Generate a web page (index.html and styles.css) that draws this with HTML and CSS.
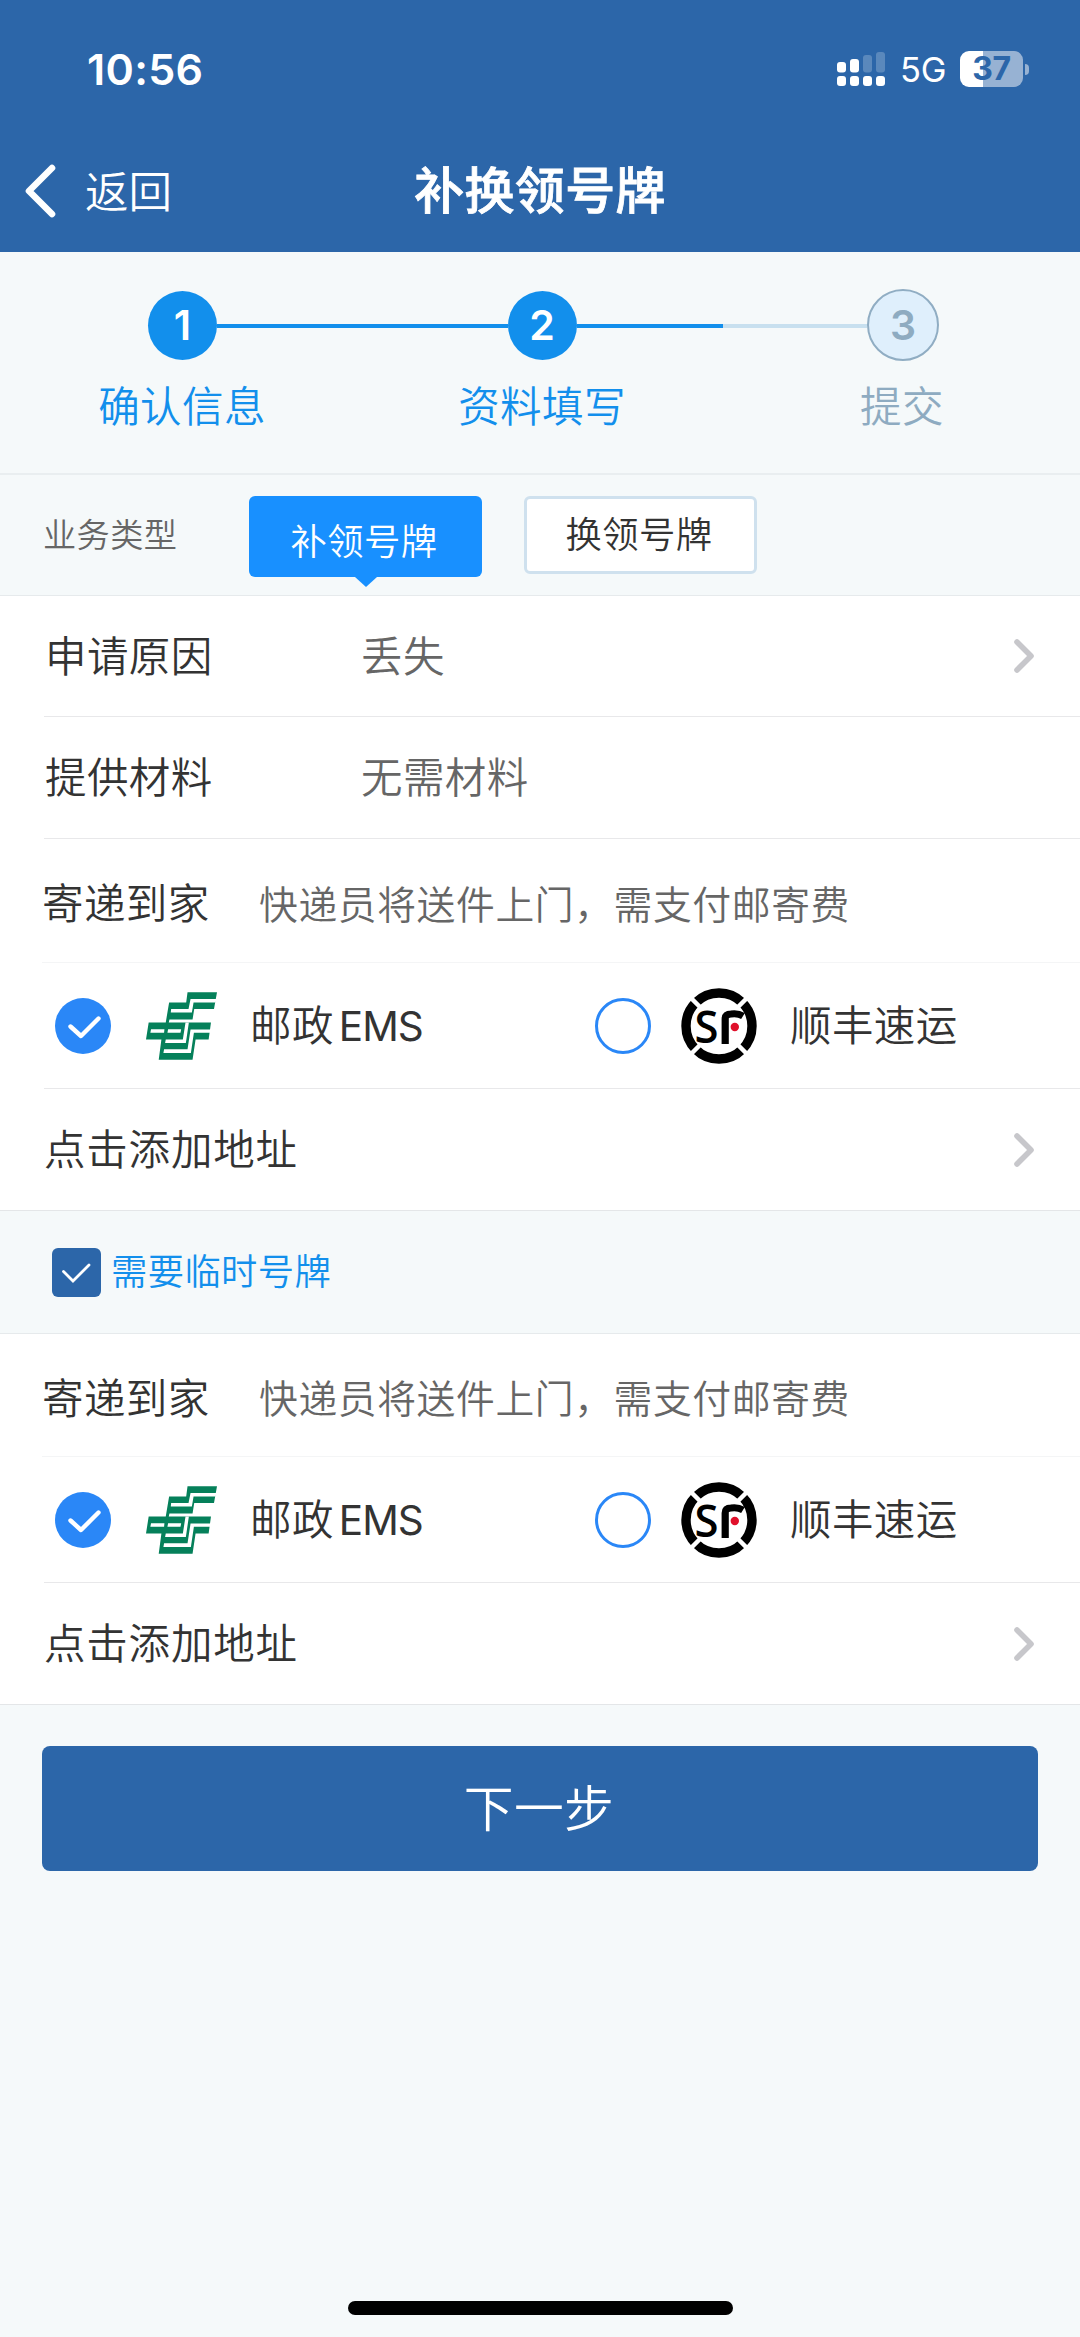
FILE: index.html
```html
<!DOCTYPE html>
<html lang="zh-CN">
<head>
<meta charset="utf-8">
<title>补换领号牌</title>
<link rel="stylesheet" href="styles.css">
</head>
<body>
<svg class="defs" width="0" height="0" aria-hidden="true">
  <symbol id="ems" viewBox="79 70 212 201">
    <path fill="#05805a" d="M148 100H199L203 70H291L282 120H223L218 151H149L147 160H273L266 211H227L218 271H117L125 211H79L87 160H138Z"/>
    <path fill="#fff" d="M154 120H206L212 90H289L287 100H221L216 130H153ZM94 180H134L133 191H92ZM145 180H184L182 191H143ZM197 160H207L198 221H136L138 211H189ZM133 240H203L212 181H272L270 191H222L213 251H131Z"/>
  </symbol>
  <symbol id="next" viewBox="0 0 22 36">
    <path d="M4 4L18 18L4 32" fill="none" stroke="#c7c7cb" stroke-width="5.6" stroke-linecap="round" stroke-linejoin="round"/>
  </symbol>
  <symbol id="tick" viewBox="0 0 56 56">
    <circle cx="28" cy="28" r="28" fill="#2a87f7"/>
    <path d="M15.500 28.500L26 38L43.500 20.500" fill="none" stroke="#fff" stroke-width="4.4" stroke-linecap="round" stroke-linejoin="round"/>
  </symbol>
</svg>

<header class="header">
  <div class="status">
    <span class="time">10:56</span>
    <div class="indicators">
      <svg class="signal" width="48" height="36" viewBox="0 0 48 36" fill="#fff">
        <rect x="0" y="25" width="9" height="10" rx="3"/><rect x="13" y="25" width="9" height="10" rx="3"/><rect x="26" y="25" width="9" height="10" rx="3"/><rect x="39" y="25" width="9" height="10" rx="3"/>
        <rect x="0" y="11" width="9" height="10.5" rx="3"/><rect x="13" y="8" width="9" height="13.5" rx="3"/>
        <g opacity=".22"><rect x="26" y="4" width="9" height="17.5" rx="3"/><rect x="39" y="1" width="9" height="20.5" rx="3"/></g>
      </svg>
      <span class="network">5G</span>
      <div class="battery"><span class="level">37</span><i class="nub"></i></div>
    </div>
  </div>
  <nav class="nav">
    <a class="back">
      <svg width="34" height="56" viewBox="0 0 34 56"><path d="M29 5L6 28L29 51" fill="none" stroke="#fff" stroke-width="6.6" stroke-linecap="round" stroke-linejoin="round"/></svg>
      <span>返回</span>
    </a>
    <h1 class="title">补换领号牌</h1>
  </nav>
</header>

<section class="steps">
  <div class="track">
    <span class="dot">1</span><span class="line"></span><span class="dot">2</span><span class="line half"></span><span class="dot pending">3</span>
  </div>
  <div class="labels"><span>确认信息</span><span>资料填写</span><span class="muted">提交</span></div>
</section>

<section class="kind">
  <span class="kind-label">业务类型</span>
  <button class="option selected">补领号牌</button>
  <button class="option">换领号牌</button>
</section>

<section class="card">
  <div class="row reason"><span class="name">申请原因</span><span class="value">丢失</span><svg class="next"><use href="#next"/></svg></div>
  <div class="row material"><span class="name">提供材料</span><span class="value">无需材料</span></div>
  <div class="row deliver"><span class="name">寄递到家</span><span class="hint">快递员将送件上门，需支付邮寄费</span></div>
  <div class="row carriers">
    <label class="carrier"><svg class="radio"><use href="#tick"/></svg><svg class="ems"><use href="#ems"/></svg><span class="ems-name">邮政<b>EMS</b></span></label>
    <label class="carrier"><span class="radio empty"></span>
      <svg class="sf" viewBox="0 0 80 80">
        <circle cx="40" cy="40" r="33" fill="none" stroke="#000" stroke-width="9.4"/>
        <path d="M10 10L22 22M70 10L58 22M10 70L22 58M70 70L58 58" stroke="#fff" stroke-width="4.5"/>
        <text class="sf-letter" x="15.5" y="57.2" textLength="24" lengthAdjust="spacingAndGlyphs">S</text>
        <path d="M46.2 58V33Q46.2 28 52 28Q59 27 64 30" fill="none" stroke="#000" stroke-width="7.2"/>
        <circle cx="55.8" cy="41" r="4.2" fill="#e0102b"/>
      </svg>
      <span class="sf-name">顺丰速运</span></label>
  </div>
  <div class="row address"><span>点击添加地址</span><svg class="next"><use href="#next"/></svg></div>
</section>

<section class="temp">
  <svg class="check" viewBox="0 0 49 49"><rect width="49" height="49" rx="6" fill="#2c66a9"/><path d="M11.500 23.500L21 33L37 17" fill="none" stroke="#fff" stroke-width="2.8" stroke-linecap="round"/></svg>
  <span>需要临时号牌</span>
</section>

<section class="card second">
  <div class="row deliver"><span class="name">寄递到家</span><span class="hint">快递员将送件上门，需支付邮寄费</span></div>
  <div class="row carriers">
    <label class="carrier"><svg class="radio"><use href="#tick"/></svg><svg class="ems"><use href="#ems"/></svg><span class="ems-name">邮政<b>EMS</b></span></label>
    <label class="carrier"><span class="radio empty"></span>
      <svg class="sf" viewBox="0 0 80 80">
        <circle cx="40" cy="40" r="33" fill="none" stroke="#000" stroke-width="9.4"/>
        <path d="M10 10L22 22M70 10L58 22M10 70L22 58M70 70L58 58" stroke="#fff" stroke-width="4.5"/>
        <text class="sf-letter" x="15.5" y="57.2" textLength="24" lengthAdjust="spacingAndGlyphs">S</text>
        <path d="M46.2 58V33Q46.2 28 52 28Q59 27 64 30" fill="none" stroke="#000" stroke-width="7.2"/>
        <circle cx="55.8" cy="41" r="4.2" fill="#e0102b"/>
      </svg>
      <span class="sf-name">顺丰速运</span></label>
  </div>
  <div class="row address"><span>点击添加地址</span><svg class="next"><use href="#next"/></svg></div>
</section>

<footer class="footer">
  <button class="submit">下一步</button>
  <div class="home-bar"></div>
</footer>
</body>
</html>
```
FILE: styles.css
```css
* { box-sizing: border-box; }
body {
  margin: 0;
  width: 1080px;
  height: 2337px;
  display: flex;
  flex-direction: column;
  background: #f5f9fa;
  color: #333;
  font-family: Inter, "Noto Sans CJK SC", sans-serif;
  font-weight: 350;
  font-size: 41.5px;
  letter-spacing: .4px;
  line-height: 1;
}
button { font: inherit; letter-spacing: inherit; margin: 0; padding: 0; border: 0; }
svg { display: block; flex: none; }
.defs { position: absolute; }

.header { height: 252px; background: #2c66a9; color: #fff; }
.status { height: 138px; padding: 0 51px 0 87px; display: flex; align-items: center; justify-content: space-between; }
.time { font-size: 43px; font-weight: 600; letter-spacing: .3px; }
.indicators { display: flex; align-items: center; }
.network { margin-left: 15px; width: 60px; font-size: 34.5px; font-weight: 400; letter-spacing: -.2px; padding-top: 3px; }
.battery { display: flex; align-items: center; gap: 2px; }
.level {
  width: 63px; height: 36px; border-radius: 9px;
  background: linear-gradient(90deg, #fff 23px, #97b2d3 23px);
  color: #2c66a9; font-size: 32px; font-weight: 700; line-height: 36px; letter-spacing: -.5px; text-align: center;
}
.nub { width: 4px; height: 11px; border-radius: 0 5px 5px 0; background: #97b2d3; }
.nav { height: 106px; display: grid; grid-template-columns: 1fr auto 1fr; align-items: center; }
.back { display: flex; align-items: center; gap: 28px; padding-left: 23px; font-size: 43.5px; letter-spacing: 0; }
.back span { padding-top: 3px; }
.title { margin: 0; font-size: 50px; font-weight: 500; letter-spacing: .3px; -webkit-text-stroke: .8px #fff; }

.steps { height: 223px; padding-top: 37px; border-bottom: 2px solid #e9eef0; }
.track { height: 72px; padding: 0 141px 0 148px; display: flex; align-items: center; }
.dot {
  width: 69px; height: 69px; border-radius: 50%; background: #128fec; color: #fff;
  font-size: 41px; font-weight: 600; line-height: 69px; letter-spacing: 0; text-align: center;
}
.pending { width: 72px; height: 72px; line-height: 68px; background: #dfeffc; border: 2px solid #90adc3; color: #8eabc1; }
.line { flex: 1; height: 4px; margin-top: 2px; background: #128fec; }
.half { background: linear-gradient(90deg, #128fec 50.5%, #c8e0ef 50.5%); }
.labels { padding: 23px 0 0 2px; display: grid; grid-template-columns: 360px 360px 360px; color: #128fec; line-height: 46px; text-align: center; }
.muted { color: #8eabc1; }

.kind { height: 121px; padding: 20.5px 0 0 43px; display: flex; align-items: flex-start; border-bottom: 1px solid #e6eaec; }
.kind-label { width: 206px; padding-top: 22px; font-size: 33.2px; line-height: 34px; color: #666; }
.option {
  width: 233px; height: 78px; margin-right: 42px; padding: 2px 3px 0 0;
  border: 3px solid #cfe1ee; border-radius: 6px; background: #fff; color: #333; font-size: 36.3px;
}
.selected { position: relative; height: 81px; padding: 13px 3px 0 0; border: 0; background: #1890ff; color: #fff; }
.selected::after {
  content: ""; position: absolute; left: 106px; top: 100%;
  border: 11px solid transparent; border-top: 10px solid #1890ff; border-bottom: 0;
}

.card { background: #fff; border-bottom: 1px solid #e4e6e8; }
.row { margin-left: 44px; display: flex; align-items: center; border-bottom: 1px solid #e8e8ea; }
.row:last-child { border-bottom: 0; }
.row span:not(.radio) { padding-top: 3px; }
.reason, .material { padding-left: 1px; }
.reason { height: 121px; }
.material { height: 122px; }
.name { width: 316px; }
.value { color: #666; }
.next { width: 22px; height: 36px; margin: 0 45px 0 auto; }
.deliver { height: 124px; margin-left: 42px; padding-top: 6px; border-color: #f4f5f6; }
.second .deliver { height: 123px; }
.deliver .name { width: 217px; }
.hint { color: #666; font-size: 38.8px; letter-spacing: .6px; }
.carriers { height: 126px; }
.carrier { flex: none; width: 540px; display: flex; align-items: center; padding-left: 11px; }
.radio { flex: none; width: 56px; height: 56px; }
.empty { border: 3px solid #2a87f7; border-radius: 50%; }
.ems { width: 71px; height: 68px; margin: 0 33px 0 35px; }
.ems-name b { margin-left: 5px; font-weight: 400; font-size: 40.5px; letter-spacing: -1px; }
.sf { width: 80px; height: 80px; margin: 0 31px 0 28px; }
.sf-letter { font: 600 45px "Open Sans", sans-serif; letter-spacing: 0; }
.address { height: 121px; letter-spacing: .8px; }

.temp { height: 123px; padding-left: 52px; display: flex; align-items: center; gap: 10px; border-bottom: 1px solid #e6eaec; color: #128fec; font-size: 36.3px; }
.temp span { padding-top: 1px; }
.check { width: 49px; height: 49px; }

.footer { flex: 1; padding: 41px 42px 22px; display: flex; flex-direction: column; align-items: center; justify-content: space-between; }
.submit { width: 996px; height: 125px; padding: 2px 2px 0 0; border-radius: 8px; background: #2c66a9; color: #fff; font-size: 49.8px; }
.home-bar { width: 385px; height: 14px; border-radius: 7px; background: #000; }
```
